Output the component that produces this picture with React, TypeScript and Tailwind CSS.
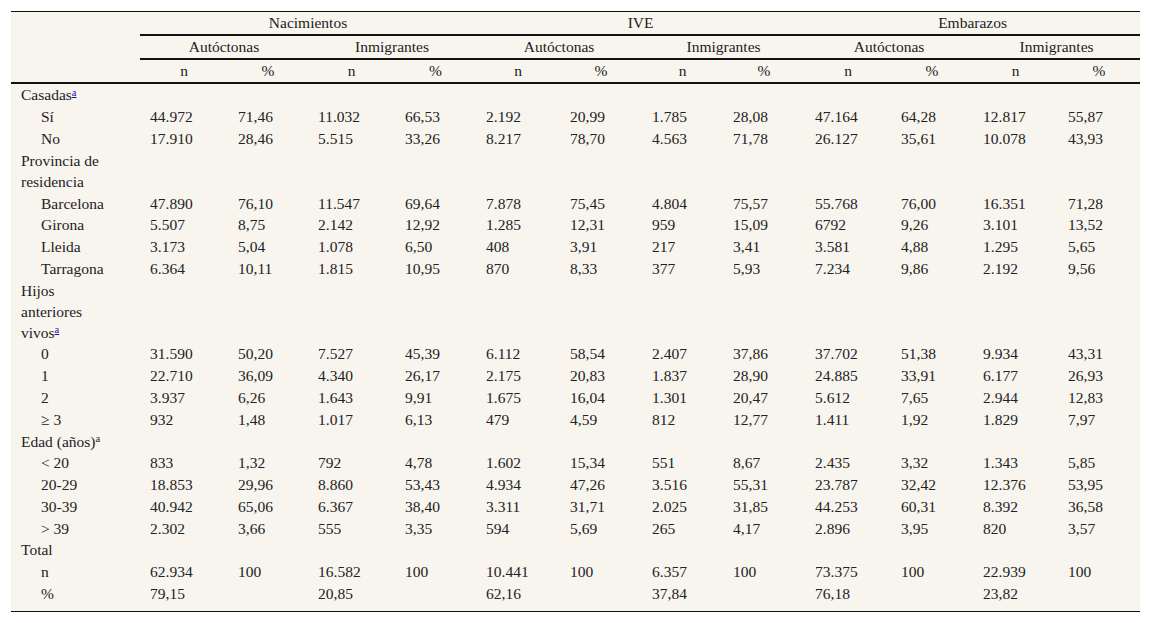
import React from 'react';

type Row =
  | { kind: 'group'; label: string; note?: 'link' | 'plain' }
  | { kind: 'data'; label: string; values: string[] };

const rows: Row[] = [
  { kind: 'group', label: 'Casadas', note: 'link' },
  { kind: 'data', label: 'Sí', values: ['44.972', '71,46', '11.032', '66,53', '2.192', '20,99', '1.785', '28,08', '47.164', '64,28', '12.817', '55,87'] },
  { kind: 'data', label: 'No', values: ['17.910', '28,46', '5.515', '33,26', '8.217', '78,70', '4.563', '71,78', '26.127', '35,61', '10.078', '43,93'] },
  { kind: 'group', label: 'Provincia de residencia' },
  { kind: 'data', label: 'Barcelona', values: ['47.890', '76,10', '11.547', '69,64', '7.878', '75,45', '4.804', '75,57', '55.768', '76,00', '16.351', '71,28'] },
  { kind: 'data', label: 'Girona', values: ['5.507', '8,75', '2.142', '12,92', '1.285', '12,31', '959', '15,09', '6792', '9,26', '3.101', '13,52'] },
  { kind: 'data', label: 'Lleida', values: ['3.173', '5,04', '1.078', '6,50', '408', '3,91', '217', '3,41', '3.581', '4,88', '1.295', '5,65'] },
  { kind: 'data', label: 'Tarragona', values: ['6.364', '10,11', '1.815', '10,95', '870', '8,33', '377', '5,93', '7.234', '9,86', '2.192', '9,56'] },
  { kind: 'group', label: 'Hijos anteriores vivos', note: 'link' },
  { kind: 'data', label: '0', values: ['31.590', '50,20', '7.527', '45,39', '6.112', '58,54', '2.407', '37,86', '37.702', '51,38', '9.934', '43,31'] },
  { kind: 'data', label: '1', values: ['22.710', '36,09', '4.340', '26,17', '2.175', '20,83', '1.837', '28,90', '24.885', '33,91', '6.177', '26,93'] },
  { kind: 'data', label: '2', values: ['3.937', '6,26', '1.643', '9,91', '1.675', '16,04', '1.301', '20,47', '5.612', '7,65', '2.944', '12,83'] },
  { kind: 'data', label: '≥ 3', values: ['932', '1,48', '1.017', '6,13', '479', '4,59', '812', '12,77', '1.411', '1,92', '1.829', '7,97'] },
  { kind: 'group', label: 'Edad (años)', note: 'plain' },
  { kind: 'data', label: '< 20', values: ['833', '1,32', '792', '4,78', '1.602', '15,34', '551', '8,67', '2.435', '3,32', '1.343', '5,85'] },
  { kind: 'data', label: '20-29', values: ['18.853', '29,96', '8.860', '53,43', '4.934', '47,26', '3.516', '55,31', '23.787', '32,42', '12.376', '53,95'] },
  { kind: 'data', label: '30-39', values: ['40.942', '65,06', '6.367', '38,40', '3.311', '31,71', '2.025', '31,85', '44.253', '60,31', '8.392', '36,58'] },
  { kind: 'data', label: '> 39', values: ['2.302', '3,66', '555', '3,35', '594', '5,69', '265', '4,17', '2.896', '3,95', '820', '3,57'] },
  { kind: 'group', label: 'Total' },
  { kind: 'data', label: 'n', values: ['62.934', '100', '16.582', '100', '10.441', '100', '6.357', '100', '73.375', '100', '22.939', '100'] },
  { kind: 'data', label: '%', values: ['79,15', '', '20,85', '', '62,16', '', '37,84', '', '76,18', '', '23,82', ''] },
];

const colWidths = ['w-[129px]', 'w-[88px]', 'w-[80px]', 'w-[87px]', 'w-[81px]', 'w-[84px]', 'w-[82px]', 'w-[81px]', 'w-[82px]', 'w-[86px]', 'w-[82px]', 'w-[85px]', 'w-[82px]'];

const groups = ['Nacimientos', 'IVE', 'Embarazos'];

export default function App() {
  return (
    <div className="min-h-screen bg-white pt-[11px] pl-[11px] font-[family-name:Liberation_Serif,Times_New_Roman,serif] text-[15.5px] text-[#222]">
      <table className="w-[1129px] table-fixed border-separate border-spacing-0 border-t border-b border-[#111] bg-[#f8f5ef]">
        <colgroup>
          {colWidths.map((w, i) => (
            <col key={i} className={w} />
          ))}
        </colgroup>
        <thead>
          <tr>
            <th rowSpan={3} className="border-b-2 border-[#111]"></th>
            {groups.map((g) => (
              <th key={g} colSpan={4} className="h-[24px] border-b-2 border-[#111] p-0 pb-px text-center font-normal leading-[21px]">
                {g}
              </th>
            ))}
          </tr>
          <tr>
            {groups.flatMap((g) =>
              ['Autóctonas', 'Inmigrantes'].map((s) => (
                <th key={g + s} colSpan={2} className="h-[24px] border-b-2 border-[#111] p-0 pb-px text-center font-normal leading-[21px]">
                  {s}
                </th>
              ))
            )}
          </tr>
          <tr>
            {Array.from({ length: 12 }).map((_, i) => (
              <th key={i} className="h-[24px] border-b-2 border-[#111] p-0 pb-px text-center font-normal leading-[21px]">
                {i % 2 === 0 ? 'n' : '%'}
              </th>
            ))}
          </tr>
        </thead>
        <tbody>
          {rows.map((r, i) => {
            const last = i === rows.length - 1;
            const pad = last ? 'pt-[0.4px] pb-[6.6px]' : 'py-[0.4px]';
            return r.kind === 'group' ? (
              <tr key={i}>
                <td className={`${pad} pr-[30px] pl-[10px] align-top leading-[21px]`}>
                  {r.label}
                  {r.note === 'link' && (
                    <sup className="top-[-0.4em] text-[10.5px] leading-none text-[#1a0dab] underline">a</sup>
                  )}
                  {r.note === 'plain' && <sup className="top-[-0.4em] text-[10.5px] leading-none">a</sup>}
                </td>
                <td colSpan={12}></td>
              </tr>
            ) : (
              <tr key={i}>
                <td className={`${pad} pl-[30px] align-top leading-[21px]`}>{r.label}</td>
                {r.values.map((v, j) => (
                  <td key={j} className={`${pad} pl-[10px] align-top leading-[21px]`}>
                    {v}
                  </td>
                ))}
              </tr>
            );
          })}
        </tbody>
      </table>
    </div>
  );
}
